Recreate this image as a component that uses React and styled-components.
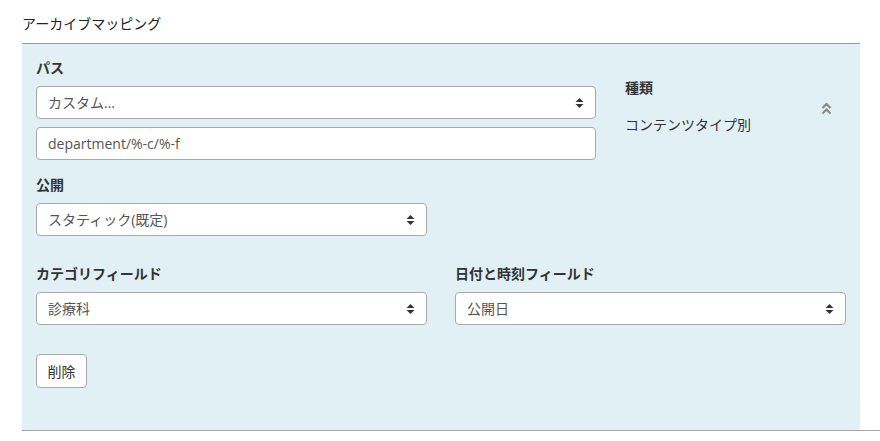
import React from 'react'
import styled, { createGlobalStyle } from 'styled-components'

const GlobalStyle = createGlobalStyle`
  body {
    margin: 0;
    background: #fff;
    font-family: "Open Sans", "Noto Sans CJK JP", sans-serif;
    font-size: 14px;
    color: #333;
  }
`;

const Page = styled.div`
  width: 880px;
  height: 441px;
  padding-top: 14px;
  box-sizing: border-box;
`;

const Title = styled.h2`
  margin: 0 0 9px 22px;
  font-size: 14px;
  font-weight: normal;
  line-height: 20px;
  color: #222;
`;

const Panel = styled.section`
  margin-left: 22px;
  width: 838px;
  box-sizing: border-box;
  background: #e1f0f4;
  border-top: 1px solid #9a9a9a;
  padding: 14px 14px 42px;
`;

const Divider = styled.div`
  margin-left: 22px;
  border-top: 1px solid #a6a6a6;
`;

const TopRow = styled.div`
  display: grid;
  grid-template-columns: 560px 1fr;
  column-gap: 29px;
`;

const Column = styled.div`
  display: flex;
  flex-direction: column;
`;

const Label = styled.label`
  display: block;
  font-weight: bold;
  line-height: 20px;
  margin: ${({ $top }) => $top || 0}px 0 8px;
  color: #333;
`;

const Box = styled.div`
  display: flex;
  align-items: center;
  height: 33px;
  width: ${({ $width }) => ($width ? `${$width}px` : '100%')};
  box-sizing: border-box;
  background: #fff;
  border: 1px solid #a9a9a9;
  border-radius: 4px;
  padding: 0 11px 0 11px;
  color: #555;
  line-height: 20px;
  margin-bottom: ${({ $gap }) => $gap || 0}px;
`;

const BoxText = styled.span`
  flex: 1;
`;

const TextInput = styled.input`
  display: block;
  width: 100%;
  height: 33px;
  box-sizing: border-box;
  border: 1px solid #a9a9a9;
  border-radius: 4px;
  padding: 0 11px;
  font: inherit;
  font-size: 14px;
  color: #555;
  background: #fff;
  outline: none;
`;

const Side = styled.div`
  display: flex;
  justify-content: space-between;
  padding-top: 20px;
  padding-right: 14px;
`;

const SideValue = styled.div`
  line-height: 20px;
  margin-top: 17px;
  color: #333;
`;

const Toggle = styled.div`
  padding-top: 22px;
  color: #8a8a8a;
`;

const FieldGrid = styled.div`
  display: grid;
  grid-template-columns: 1fr 1fr;
  column-gap: 28px;
  margin-top: 28px;
`;

const Button = styled.button`
  margin-top: 29px;
  height: 34px;
  width: 51px;
  box-sizing: border-box;
  border: 1px solid #a9a9a9;
  border-radius: 4px;
  background: #fff;
  font: inherit;
  font-size: 14px;
  color: #333;
  padding: 0;
`;

const Arrows = () => (
  <svg width="9" height="12" viewBox="0 0 9 12">
    <path d="M4.5 1 L8.5 5 L0.5 5 Z M4.5 11 L8.5 7 L0.5 7 Z" fill="#333" />
  </svg>
);

const Select = ({ value, width, gap }) => (
  <Box $width={width} $gap={gap}>
    <BoxText>{value}</BoxText>
    <Arrows />
  </Box>
);

const DoubleUp = () => (
  <svg width="11" height="13" viewBox="0 0 11 13" fill="none" stroke="currentColor" strokeWidth="2.2">
    <path d="M1.5 6 L5.5 2 L9.5 6" />
    <path d="M1.5 11.5 L5.5 7.5 L9.5 11.5" />
  </svg>
);

const App = () => {
  return (
    <Page>
      <GlobalStyle />
      <Title>アーカイブマッピング</Title>
      <Panel>
        <TopRow>
          <Column>
            <Label>パス</Label>
            <Select value="カスタム..." gap={8} />
            <TextInput readOnly value="department/%-c/%-f" />
            <Label $top={15}>公開</Label>
            <Select value="スタティック(既定)" width={391} />
          </Column>
          <Side>
            <div>
              <Label>種類</Label>
              <SideValue>コンテンツタイプ別</SideValue>
            </div>
            <Toggle>
              <DoubleUp />
            </Toggle>
          </Side>
        </TopRow>
        <FieldGrid>
          <Column>
            <Label>カテゴリフィールド</Label>
            <Select value="診療科" />
          </Column>
          <Column>
            <Label>日付と時刻フィールド</Label>
            <Select value="公開日" />
          </Column>
        </FieldGrid>
        <Button>削除</Button>
      </Panel>
      <Divider />
    </Page>
  )
}

export default App
